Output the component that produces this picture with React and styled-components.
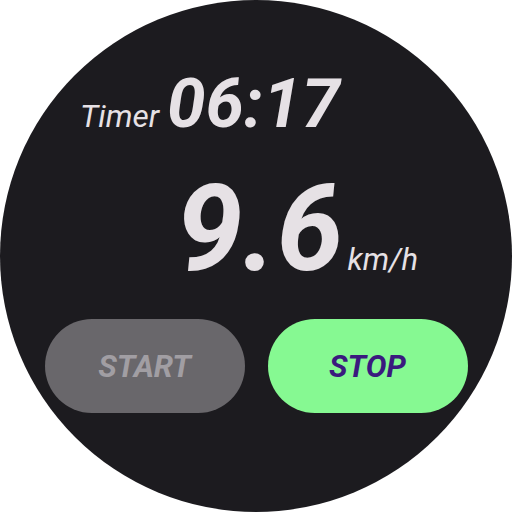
import React from 'react'
import styled, { createGlobalStyle } from 'styled-components'

const Global = createGlobalStyle`
    html, body {
        margin: 0;
        padding: 0;
        background: #ffffff;
    }
    body {
        font-family: Roboto, "Noto Sans", sans-serif;
    }
`

function App() {
    return (
        <>
            <Global />
            <WatchFace>
                <TimerRow>
                    <Label>Timer</Label>
                    <Clock>06:17</Clock>
                </TimerRow>
                <SpeedRow>
                    <Speed>9.6</Speed>
                    <Unit>km/h</Unit>
                </SpeedRow>
                <Buttons>
                    <Pill $variant="idle">START</Pill>
                    <Pill $variant="active">STOP</Pill>
                </Buttons>
            </WatchFace>
        </>
    )
}

const WatchFace = styled.div`
    width: 512px;
    height: 512px;
    border-radius: 50%;
    background: #1c1b1f;
    color: #e6e1e5;
    display: flex;
    flex-direction: column;
    box-sizing: border-box;
    padding-top: 69px;
    overflow: hidden;
`

const TimerRow = styled.div`
    display: flex;
    align-items: baseline;
    gap: 8px;
    padding-left: 80px;
    height: 70px;
    font-style: italic;
`

const Label = styled.span`
    font-size: 31.5px;
    font-weight: 400;
`

const Clock = styled.span`
    font-size: 69px;
    font-weight: 700;
    line-height: 70px;
`

const SpeedRow = styled.div`
    display: flex;
    align-items: baseline;
    justify-content: flex-end;
    gap: 4px;
    padding-right: 94px;
    margin-top: 30px;
    height: 120px;
    font-style: italic;
`

const Speed = styled.span`
    font-size: 120px;
    font-weight: 700;
    line-height: 120px;
`

const Unit = styled.span`
    font-size: 31px;
    font-weight: 400;
`

const Buttons = styled.div`
    display: flex;
    justify-content: center;
    gap: 23px;
    margin-top: 30px;
`

const Pill = styled.div`
    width: 200px;
    height: 94px;
    border-radius: 47px;
    display: flex;
    align-items: center;
    justify-content: center;
    font-size: 31px;
    font-weight: 700;
    font-style: italic;
    background: ${p => p.$variant === 'active' ? '#86f992' : '#69676b'};
    color: ${p => p.$variant === 'active' ? '#3a1a7e' : '#a19ea3'};
`

export default App
